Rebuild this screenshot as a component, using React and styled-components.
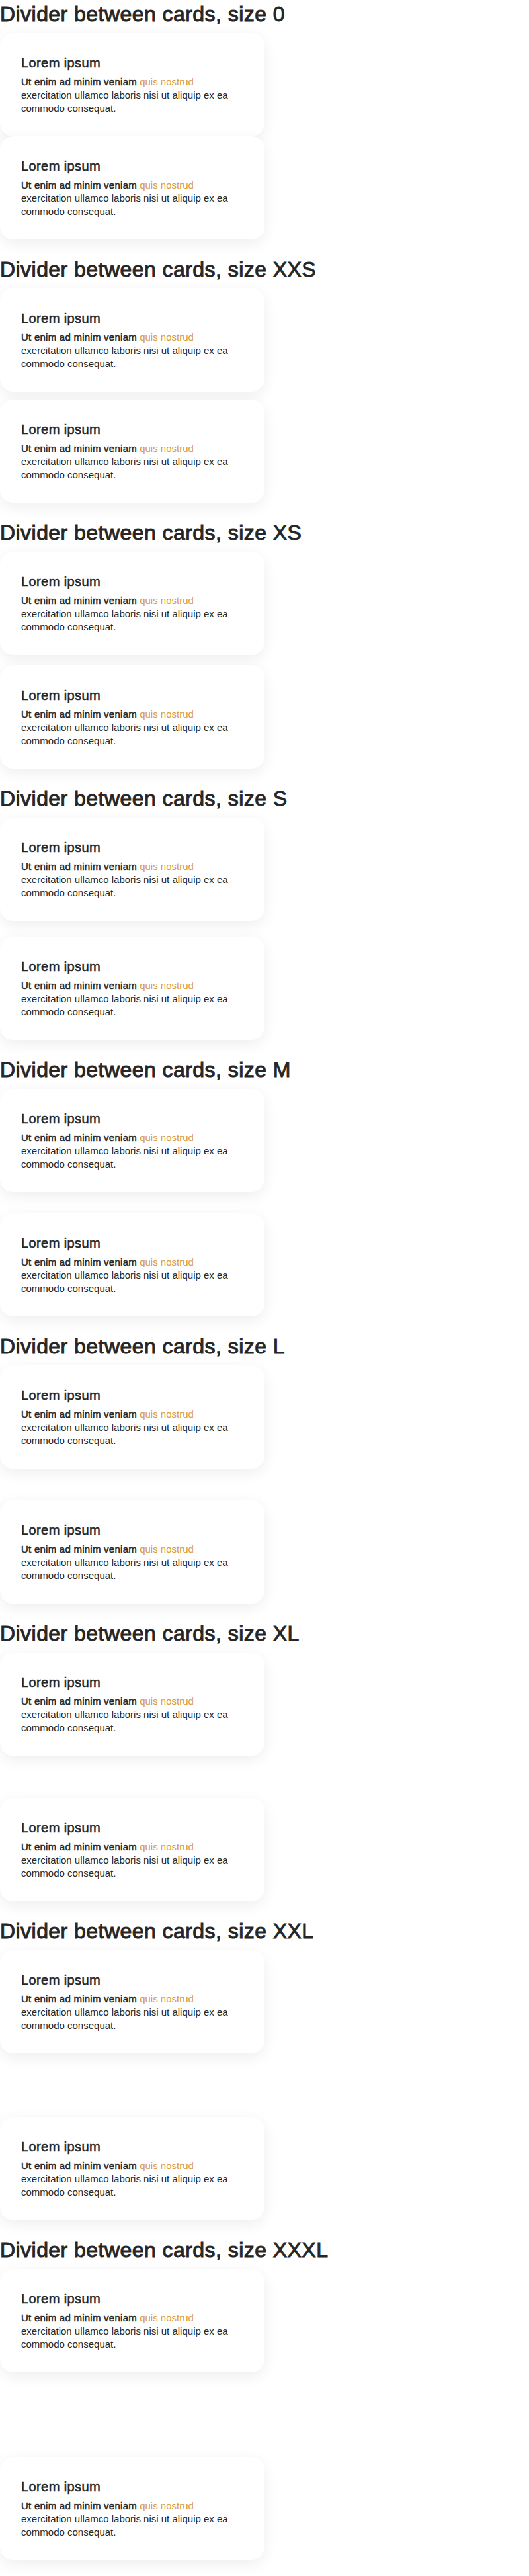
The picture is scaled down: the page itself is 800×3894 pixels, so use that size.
import React from 'react';
import styled, { createGlobalStyle } from 'styled-components';

const GlobalStyle = createGlobalStyle`
  html, body {
    margin: 0;
    padding: 0;
    background: #fff;
  }
  body {
    font-family: "Liberation Sans", Arial, Helvetica, sans-serif;
    color: #262626;
  }
`;

// Liberation has no medium cut, so medium text is regular + a thin stroke
const Page = styled.div`
  display: flex;
  flex-direction: column;
`;

const Section = styled.section`
  margin-bottom: 24px;
`;

const Heading = styled.h2`
  font-size: 32px;
  font-weight: 400;
  line-height: 42px;
  letter-spacing: 0.45px;
  color: #262626;
  -webkit-text-stroke: 1px #262626;
  margin: 0 0 8px 0;
`;

const Stack = styled.div`
  display: flex;
  flex-direction: column;
  gap: ${props => props.$gap}px;
`;

const Card = styled.div`
  width: 400px;
  box-sizing: border-box;
  padding: 32px;
  background: #fff;
  border-radius: 20px;
  box-shadow: 0 6px 22px rgba(0, 0, 0, 0.07);
`;

const CardTitle = styled.h3`
  font-size: 20px;
  font-weight: 400;
  line-height: 26px;
  letter-spacing: 0.4px;
  color: #262626;
  -webkit-text-stroke: 0.6px #262626;
  margin: 0 0 6px 0;
`;

const CardText = styled.p`
  font-size: 15px;
  line-height: 20px;
  color: #262626;
  margin: 0;
`;

const Strong = styled.span`
  letter-spacing: 0.25px;
  -webkit-text-stroke: 0.5px #262626;
`;

const Accent = styled.span`
  color: #d99a3f;
`;

const sizes = [
  { label: '0', gap: 0 },
  { label: 'XXS', gap: 12 },
  { label: 'XS', gap: 16 },
  { label: 'S', gap: 24 },
  { label: 'M', gap: 32 },
  { label: 'L', gap: 48 },
  { label: 'XL', gap: 64 },
  { label: 'XXL', gap: 96 },
  { label: 'XXXL', gap: 128 },
];

const LoremCard = () => (
  <Card>
    <CardTitle>Lorem ipsum</CardTitle>
    <CardText>
      <Strong>Ut enim ad minim veniam</Strong> <Accent>quis nostrud</Accent> exercitation ullamco laboris nisi ut aliquip ex ea commodo consequat.
    </CardText>
  </Card>
);

const App = () => (
  <Page>
    <GlobalStyle />
    {sizes.map(s => (
      <Section key={s.label}>
        <Heading>Divider between cards, size {s.label}</Heading>
        <Stack $gap={s.gap}>
          <LoremCard />
          <LoremCard />
        </Stack>
      </Section>
    ))}
  </Page>
);

export default App;
